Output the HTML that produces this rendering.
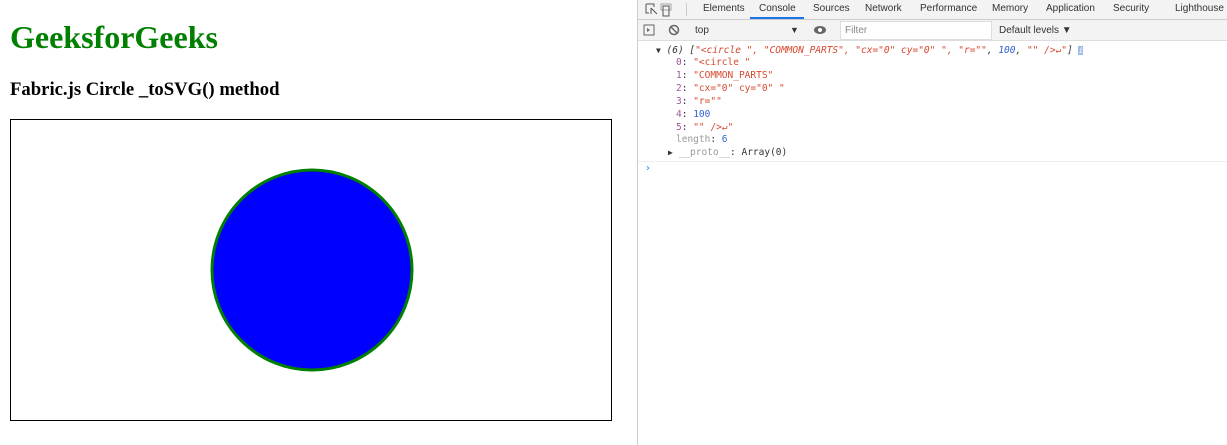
<!DOCTYPE html>
<html><head><style>
body{margin:0;width:1227px;height:445px;overflow:hidden;background:#fff;position:relative;font-family:"Liberation Serif",serif}
.l{position:absolute}
h1{position:absolute;left:10px;top:19px;margin:0;font-size:32px;color:#008000;font-weight:bold}
h3{position:absolute;left:10px;top:79px;margin:0;font-size:18.7px;font-weight:bold}
#cv{position:absolute;left:10px;top:119px;width:600px;height:300px;border:1px solid #000}
#dt{position:absolute;left:637px;top:0;width:590px;height:445px;border-left:1px solid #ccc;font-family:"Liberation Sans",sans-serif;font-size:10px;color:#333}
.tabs{height:19px;background:#f3f3f3;border-bottom:1px solid #ccc;position:relative}
.tabs span{position:absolute;top:3px}
.tb{height:20px;background:#f3f3f3;border-bottom:1px solid #ddd;position:relative}
.tb span{position:absolute;top:5px}
.mono{font-family:"DejaVu Sans Mono","Liberation Mono",monospace;font-size:9.5px;position:absolute;white-space:pre;line-height:12.9px}
.r{color:#d8472f}.p{color:#a0589c}.b{color:#3060d0}.g{color:#999}
</style></head><body>
<h1>GeeksforGeeks</h1>
<h3>Fabric.js Circle _toSVG() method</h3>
<div id="cv"><svg width="600" height="300"><circle cx="301" cy="150" r="100" fill="#0000ff" stroke="#008000" stroke-width="3"/></svg></div>
<div id="dt">
<div class="tabs">
<svg class="l" style="left:7px;top:3px" width="30" height="14"><path d="M1 1h8v3M1 1v9h3M6 5l6 6M6 5v6" stroke="#555" fill="none"/><rect x="18" y="3" width="6" height="10" stroke="#555" fill="none"/><rect x="16" y="1" width="10" height="6" stroke="#555" fill="none" opacity=".5"/></svg>
<div class="l" style="left:48px;top:3px;width:1px;height:13px;background:#ccc"></div>
<span style="left:65px">Elements</span>
<span style="left:121px">Console</span>
<div class="l" style="left:112px;top:17px;width:54px;height:2px;background:#1a73e8"></div>
<span style="left:175px">Sources</span>
<span style="left:227px">Network</span>
<span style="left:282px">Performance</span>
<span style="left:354px">Memory</span>
<span style="left:408px">Application</span>
<span style="left:475px">Security</span>
<span style="left:537px">Lighthouse</span>
</div>
<div class="tb">
<svg class="l" style="left:5px;top:4px" width="40" height="13"><rect x="1" y="1" width="10" height="10" stroke="#666" fill="none"/><path d="M4 4l3 2-3 2z" fill="#666"/><circle cx="31" cy="6" r="4.5" stroke="#666" fill="none" stroke-width="1.5"/><path d="M28 3l6 6" stroke="#666" stroke-width="1.5"/></svg>
<span style="left:57px">top</span><span style="left:152px;font-size:9px">▼</span>
<svg class="l" style="left:175px;top:5px" width="14" height="10"><ellipse cx="7" cy="5" rx="6" ry="4" fill="#666"/><circle cx="7" cy="5" r="2" fill="#fff"/></svg>
<div class="l" style="left:202px;top:1px;width:150px;height:17px;background:#fff;border:1px solid #ddd"></div>
<span style="left:207px;color:#888">Filter</span>
<span style="left:361px">Default levels ▼</span>
</div>
<div class="mono" style="left:18px;top:45px;font-style:italic"><span style="font-style:normal;font-size:8px">▼</span> (6) [<span class="r">"&lt;circle ", "COMMON_PARTS", "cx="0" cy="0" ", "r=""</span>, <span class="b">100</span>, <span class="r">"" /&gt;↵"</span>] <span style="background:#9bbbe8;color:#fff;font-size:8px">i</span></div>
<div class="mono" style="left:38px;top:57px"><span class="p">0</span>: <span class="r">"&lt;circle "</span>
<span class="p">1</span>: <span class="r">"COMMON_PARTS"</span>
<span class="p">2</span>: <span class="r">"cx="0" cy="0" "</span>
<span class="p">3</span>: <span class="r">"r=""</span>
<span class="p">4</span>: <span class="b">100</span>
<span class="p">5</span>: <span class="r">"" /&gt;↵"</span>
<span class="g">length</span>: <span class="b">6</span></div>
<div class="mono" style="left:30px;top:147px"><span style="font-size:8px">▶</span> <span class="g">__proto__</span>: Array(0)</div>
<div class="l" style="left:0;top:161px;width:590px;border-top:1px solid #eee"></div>
<div class="mono" style="left:7px;top:163px;color:#1a73e8">›</div>
</div>
</body></html>
